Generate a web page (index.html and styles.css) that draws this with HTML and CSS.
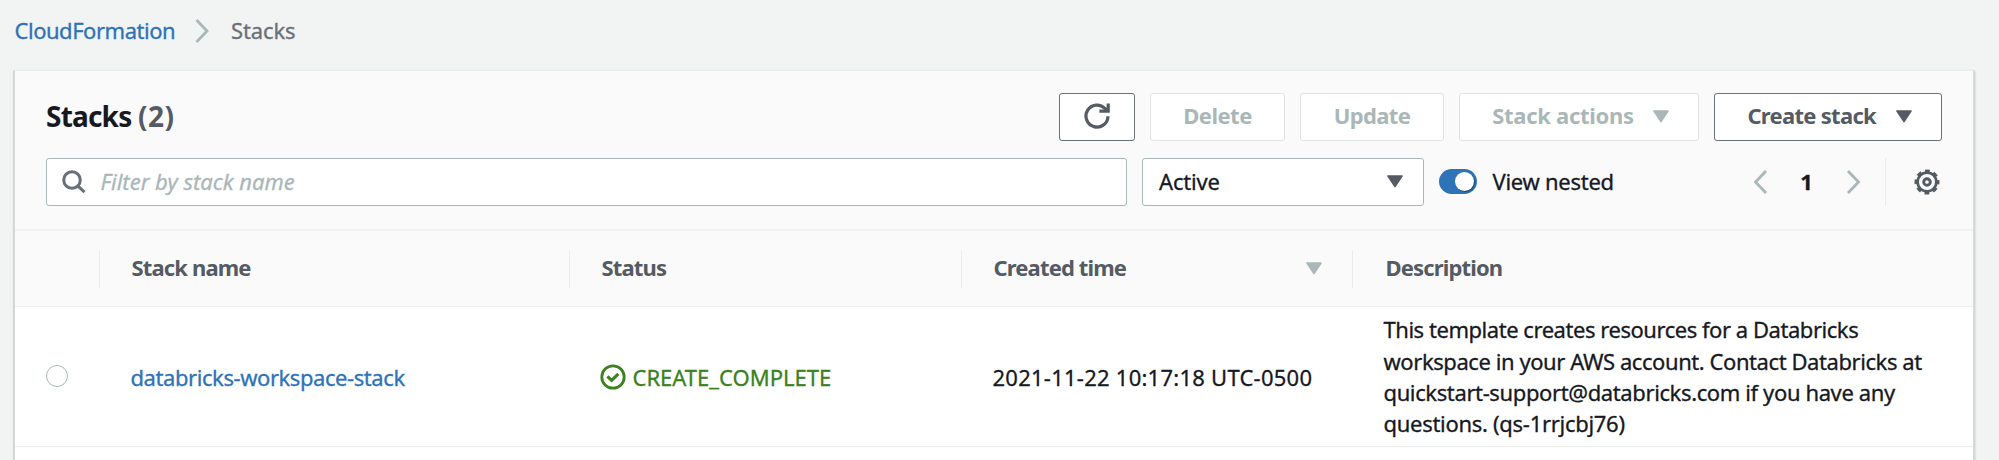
FILE: index.html
```html
<!DOCTYPE html>
<html lang="en">
<head>
<meta charset="utf-8">
<title>CloudFormation - Stacks</title>
<link rel="stylesheet" href="styles.css">
</head>
<body>
<nav class="breadcrumb">
  <a class="link crumb-root">CloudFormation</a>
  <svg class="crumb-sep" width="15" height="26" viewBox="0 0 15 26"><path d="M1.5 2 12 13 1.5 24" fill="none" stroke="#aab7b8" stroke-width="2.8"/></svg>
  <span class="crumb-current">Stacks</span>
</nav>
<main class="panel">
  <header class="panel-head">
    <div class="title-row">
      <h2 class="title">Stacks <span class="count">(2)</span></h2>
      <div class="actions">
        <button class="btn btn-refresh" aria-label="Refresh">
          <svg width="28" height="28" viewBox="0 0 28 28" fill="none" stroke="#545b64" stroke-width="3.2"><path d="M25 14.2A11 11 0 1 1 21.9 6.4L24 8.8"/><path d="M25.2 1.6V9.2H16.4"/></svg>
        </button>
        <button class="btn btn-delete disabled">Delete</button>
        <button class="btn btn-update disabled">Update</button>
        <button class="btn btn-actions disabled">Stack actions <svg class="caret" width="16" height="13" viewBox="0 0 16 13"><path d="M1 1H15L8 11.6Z" fill="currentColor" stroke="currentColor" stroke-width="1.6" stroke-linejoin="round"/></svg></button>
        <button class="btn btn-create">Create stack <svg class="caret" width="16" height="13" viewBox="0 0 16 13"><path d="M1 1H15L8 11.6Z" fill="currentColor" stroke="currentColor" stroke-width="1.6" stroke-linejoin="round"/></svg></button>
      </div>
    </div>
    <div class="filter-row">
      <div class="search">
        <svg width="24" height="24" viewBox="0 0 24 24" fill="none" stroke="#687078" stroke-width="3"><circle cx="10" cy="10" r="8.3"/><path d="M15.8 15.8 22.5 22.2"/></svg>
        <span class="placeholder">Filter by stack name</span>
      </div>
      <div class="select"><span class="select-value">Active</span>
        <svg class="caret" width="16" height="13" viewBox="0 0 16 13"><path d="M1 1H15L8 11.6Z" fill="currentColor" stroke="currentColor" stroke-width="1.6" stroke-linejoin="round"/></svg>
      </div>
      <span class="toggle"><span class="knob"></span></span>
      <span class="toggle-label">View nested</span>
      <div class="pager">
        <svg width="15" height="26" viewBox="0 0 15 26"><path d="M13 2 2.5 13 13 24" fill="none" stroke="#aab7b8" stroke-width="2.8"/></svg>
        <span class="page">1</span>
        <svg width="15" height="26" viewBox="0 0 15 26"><path d="M2 2 12.5 13 2 24" fill="none" stroke="#aab7b8" stroke-width="2.8"/></svg>
      </div>
      <div class="settings">
        <svg width="26" height="26" viewBox="0 0 26 26" fill="none" stroke="#545b64">
          <circle cx="13" cy="13" r="9.4" stroke-width="2.7"/>
          <circle cx="13" cy="13" r="11.2" stroke-width="2.6" stroke-dasharray="4.8 3.997" stroke-dashoffset="2.4"/>
          <circle cx="13" cy="13" r="3.3" stroke-width="2.9"/>
        </svg>
      </div>
    </div>
  </header>
  <div class="grid thead">
    <div class="th th-select"></div>
    <div class="th th-name">Stack name</div>
    <div class="th th-status">Status</div>
    <div class="th th-created">Created time
      <svg class="caret sort" width="16" height="13" viewBox="0 0 16 13"><path d="M1 1H15L8 11.6Z" fill="currentColor" stroke="currentColor" stroke-width="1.6" stroke-linejoin="round"/></svg>
    </div>
    <div class="th th-desc">Description</div>
  </div>
  <div class="grid row">
    <div class="td td-select"><span class="radio"></span></div>
    <div class="td"><a class="link stack-link">databricks-workspace-stack</a></div>
    <div class="td td-status">
      <svg width="26" height="26" viewBox="0 0 26 26" fill="none" stroke="#3a8220" stroke-width="2.8"><circle cx="13" cy="13" r="11.2"/><path d="M7.4 12.4 11.6 16.4 18.4 9.8" stroke-width="3.2"/></svg>
      <span>CREATE_COMPLETE</span>
    </div>
    <div class="td td-created">2021-11-22 10:17:18 UTC-0500</div>
    <div class="td td-desc">
      <p class="desc">This template creates resources for a Databricks<br><span class="desc-contact">workspace in your AWS account. Contact Databricks at</span><br><span class="desc-mail">quickstart-support@databricks.com if you have any</span><br><span class="desc-id">questions. (qs-1rrjcbj76)</span></p>
    </div>
  </div>
</main>
</body>
</html>
```
FILE: styles.css
```css
* { box-sizing: border-box; }

body {
  margin: 0;
  height: 460px;
  overflow: hidden;
  background: #f2f3f3;
  color: #16191f;
  font: 22px/31.4px "Noto Sans", "Open Sans", sans-serif;
  white-space: nowrap;
  -webkit-text-stroke: .3px;
}

svg { display: block; flex: none; }
.link { color: #2e73b8; }

.breadcrumb {
  display: flex;
  align-items: center;
  height: 70px;
  padding: 0 0 9px 14.5px;
}
.crumb-root { width: 180px; letter-spacing: -0.47px; }
.crumb-sep { margin-right: 21.5px; }
.crumb-current { color: #687078; letter-spacing: -0.13px; }

.panel {
  width: 1960px;
  height: 400px;
  margin-left: 14px;
  background: #fff;
  border-left: 1px solid #d5dbdb;
  border-right: 1px solid #d5dbdb;
  box-shadow: 1px 1px 2px rgba(0, 28, 36, .2), -1px 1px 1px rgba(0, 28, 36, .12);
}

.panel-head {
  height: 161px;
  padding: 22px 31px 0 31px;
  background: #fafafa;
  border-top: 1.5px solid #eaeded;
  border-bottom: 2px solid #f0f1f1;
}

.title-row {
  display: flex;
  justify-content: space-between;
  align-items: center;
  height: 48px;
}
.title {
  margin: 0;
  padding-bottom: 2px;
  font-size: 28px;
  line-height: 40px;
  letter-spacing: -.8px;
  -webkit-text-stroke: 0;
}
.count { color: #545b64; letter-spacing: .6px; }

.actions { display: flex; gap: 15px; }
.btn {
  display: flex;
  align-items: center;
  justify-content: center;
  height: 48px;
  padding: 0 0 2px;
  background: #fff;
  border: 1.5px solid #687078;
  border-radius: 3px;
  color: #545b64;
  font: 700 22px/31.4px "Noto Sans", "Open Sans", sans-serif;
  -webkit-text-stroke: 0;
}
.btn.disabled { border-color: #dfe3e3; color: #aab7b8; }
.btn-refresh { width: 76px; }
.btn-delete { width: 135px; letter-spacing: -.5px; }
.btn-update { width: 144px; letter-spacing: -.63px; }
.btn-actions { width: 239.5px; padding-left: 4px; gap: 19.5px; letter-spacing: -.3px; }
.btn-create { width: 228.5px; padding-left: 4px; gap: 20px; letter-spacing: -.7px; }

.filter-row {
  display: flex;
  align-items: center;
  height: 48px;
  margin-top: 17px;
}
.search,
.select {
  display: flex;
  align-items: center;
  height: 48px;
  padding-bottom: 1px;
  background: #fff;
  border: 1.5px solid #aab7b8;
  border-radius: 3px;
}
.search { width: 1081px; padding-left: 15px; }
.placeholder { margin-left: 14.5px; color: #aab7b8; font-style: italic; }
.select {
  width: 281.5px;
  margin-left: 15px;
  padding: 0 20px 1px 16px;
  justify-content: space-between;
}
.select-value { letter-spacing: -.18px; }
.select .caret { color: #545b64; }

.toggle {
  display: flex;
  justify-content: flex-end;
  align-items: center;
  width: 38px;
  height: 25px;
  margin: 0 0 1px 15.5px;
  padding-right: 3.5px;
  border-radius: 13px;
  background: #2e73b8;
}
.knob {
  width: 19px;
  height: 19px;
  border-radius: 50%;
  background: #fff;
  box-shadow: 1px 1px 1px rgba(0, 0, 0, .35);
}
.toggle-label { margin: 0 0 1px 15.5px; letter-spacing: -.27px; }

.pager {
  display: flex;
  align-items: center;
  justify-content: space-between;
  width: 108px;
  margin-left: auto;
}
.page { font-weight: 700; }
.settings {
  display: flex;
  justify-content: flex-end;
  align-items: center;
  width: 57px;
  height: 48px;
  margin-left: 24.5px;
  padding-right: 2.5px;
  border-left: 1.5px solid #eaeded;
}

.grid {
  display: grid;
  grid-template-columns: 85px 470px 392px 391px 1fr;
}
.thead {
  height: 76px;
  align-items: center;
  background: #fafafa;
  border-bottom: 1.5px solid #eaeded;
  color: #545b64;
  font-weight: 700;
  letter-spacing: -.85px;
  -webkit-text-stroke: 0;
}
.th {
  display: flex;
  align-items: center;
  justify-content: space-between;
  height: 38px;
  padding: 0 30px 1px 31.5px;
  border-right: 1.5px solid #eaeded;
}
.th-desc { padding-left: 32.5px; border-right: 0; }
.sort { color: #aab7b8; }

.row {
  height: 140px;
  border-bottom: 1.5px solid #eaeded;
}
.td {
  display: flex;
  align-items: center;
  padding: 2px 0 0 30.5px;
}
.td-select { padding: 0 0 1px 31px; }
.radio {
  width: 22px;
  height: 22px;
  border: 1.5px solid #aab7b8;
  border-radius: 50%;
}
.stack-link { letter-spacing: -.43px; }
.td-status { gap: 7px; padding-left: 29.5px; color: #3a8220; }
.td-status svg { margin-bottom: 1px; }
.td-created { letter-spacing: .25px; }
.td-desc { padding-top: 1px; }
.desc { margin: 0; letter-spacing: -.46px; }
.desc-contact { letter-spacing: -.43px; }
.desc-mail { letter-spacing: -.38px; }
.desc-id { letter-spacing: -.29px; }
```
